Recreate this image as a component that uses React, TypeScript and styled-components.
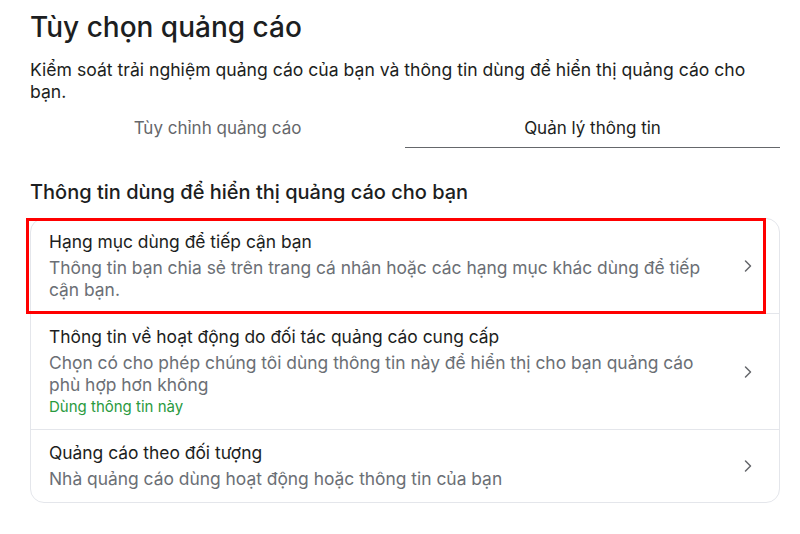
import styled, { createGlobalStyle } from 'styled-components';

const GlobalStyle = createGlobalStyle`
  body {
    margin: 0;
    background: #ffffff;
    font-family: Inter, "Noto Sans", sans-serif;
    color: #1c1e21;
  }
`;

const Page = styled.div`
  width: 750px;
  padding: 10px 0 0 30px;
`;

const Title = styled.h1`
  margin: 0;
  font-size: 28px;
  line-height: 34px;
  font-weight: 500;
  color: #1c1e21;
`;

const Intro = styled.p`
  margin: 15px 0 0;
  font-size: 17.6px;
  line-height: 22px;
  color: #1c1e21;
`;

const Tabs = styled.div`
  display: grid;
  grid-template-columns: 1fr 1fr;
  margin-top: 6px;
`;

const Tab = styled.div<{ active?: boolean }>`
  text-align: center;
  padding: 8px 0;
  font-size: 17px;
  line-height: 22px;
  color: ${(p) => (p.active ? '#1c1e21' : '#65676b')};
  border-bottom: 1px solid ${(p) => (p.active ? '#65676b' : 'transparent')};
`;

const SectionTitle = styled.h2`
  margin: 31px 0 0;
  font-size: 20px;
  line-height: 26px;
  font-weight: 500;
  color: #1c1e21;
`;

const Card = styled.div`
  position: relative;
  margin-top: 13px;
  border: 1px solid #e4e6eb;
  border-radius: 14px;
`;

const Row = styled.div`
  display: flex;
  align-items: center;
  padding: 12px 18px;
  & + & {
    border-top: 1px solid #e4e6eb;
  }
  &:last-of-type {
    padding-bottom: 11px;
  }
`;

const RowText = styled.div`
  flex: 1;
  padding-right: 30px;
`;

const RowTitle = styled.div`
  font-size: 17.4px;
  line-height: 22px;
  margin-bottom: 4px;
  color: #1c1e21;
`;

const RowDesc = styled.div`
  font-size: 17.4px;
  line-height: 22px;
  color: #6b6f75;
`;

const Status = styled.div`
  font-size: 15px;
  line-height: 21px;
  color: #2a9a3e;
`;

const Chevron = styled.svg`
  width: 16px;
  height: 16px;
  flex: none;
  margin-right: 5px;
`;

const Highlight = styled.div`
  position: absolute;
  left: -5px;
  top: -1px;
  width: 740px;
  height: 96px;
  box-sizing: border-box;
  border: 3px solid #ff0000;
  pointer-events: none;
`;

const ChevronIcon = () => (
  <Chevron viewBox="0 0 16 16">
    <path d="M5.5 3 L10.5 8 L5.5 13" fill="none" stroke="#65676b" strokeWidth="1.5" strokeLinecap="round" strokeLinejoin="round" />
  </Chevron>
);

const rows = [
  {
    title: 'Hạng mục dùng để tiếp cận bạn',
    desc: 'Thông tin bạn chia sẻ trên trang cá nhân hoặc các hạng mục khác dùng để tiếp cận bạn.',
  },
  {
    title: 'Thông tin về hoạt động do đối tác quảng cáo cung cấp',
    desc: 'Chọn có cho phép chúng tôi dùng thông tin này để hiển thị cho bạn quảng cáo phù hợp hơn không',
    status: 'Dùng thông tin này',
  },
  {
    title: 'Quảng cáo theo đối tượng',
    desc: 'Nhà quảng cáo dùng hoạt động hoặc thông tin của bạn',
  },
];

export default function App() {
  return (
    <>
      <GlobalStyle />
      <Page>
        <Title>Tùy chọn quảng cáo</Title>
        <Intro>
          Kiểm soát trải nghiệm quảng cáo của bạn và thông tin dùng để hiển thị quảng cáo cho bạn.
        </Intro>
        <Tabs>
          <Tab>Tùy chỉnh quảng cáo</Tab>
          <Tab active>Quản lý thông tin</Tab>
        </Tabs>
        <SectionTitle>Thông tin dùng để hiển thị quảng cáo cho bạn</SectionTitle>
        <Card>
          {rows.map((r) => (
            <Row key={r.title}>
              <RowText>
                <RowTitle>{r.title}</RowTitle>
                <RowDesc>{r.desc}</RowDesc>
                {r.status && <Status>{r.status}</Status>}
              </RowText>
              <ChevronIcon />
            </Row>
          ))}
          <Highlight />
        </Card>
      </Page>
    </>
  );
}
